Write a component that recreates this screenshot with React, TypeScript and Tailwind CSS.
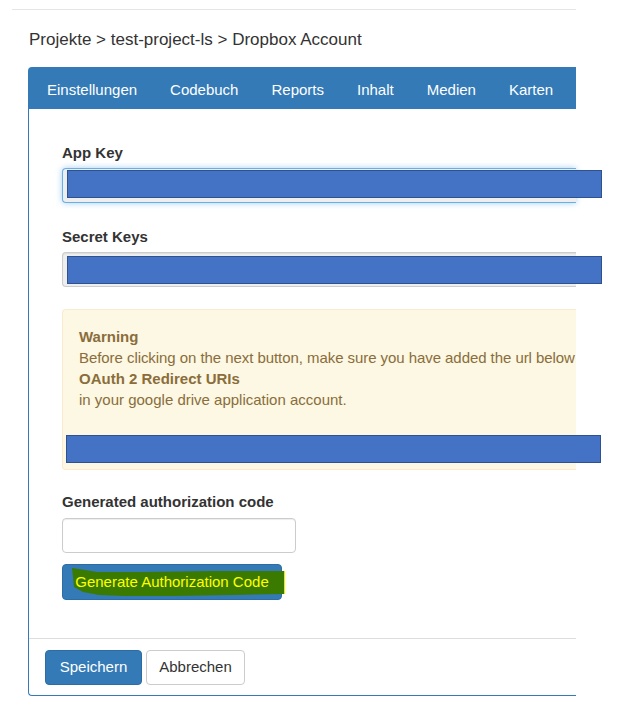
import React from 'react';

const tabs = ['Einstellungen', 'Codebuch', 'Reports', 'Inhalt', 'Medien', 'Karten'];

// redaction boxes drawn over the screenshot, they run past the crop edge
const Redact = ({ className }: { className: string }) => (
    <div
        className={`absolute left-[4px] h-[28px] w-[535px] border border-[#2f528f] bg-[#4472c4] ${className}`}
    />
);

const Highlight = () => (
    <svg
        className="pointer-events-none absolute left-0 top-0"
        width="224"
        height="36"
        viewBox="0 0 224 36"
    >
        <polygon
            points="9,3 22,5 34,7 80,7 150,6 221,6 221,29 170,30 110,31 60,31 36,30 20,27 11,22 10,12"
            fill="#3b7a00"
        />
        <line x1="221.5" y1="6" x2="221.5" y2="29" stroke="#e6f000" strokeWidth="1" />
    </svg>
);

const App = () => {
    return (
        <div className="min-h-[715px] bg-white font-['Liberation_Sans',Arial,sans-serif] text-[#333]">
            <div className="w-[576px] pt-[9px]">
                <div className="ml-[12px] h-px bg-[#e5e5e5]" />
                <div className="pl-[29px] pt-[19px] text-[17px] leading-[22px]">
                    Projekte &gt; test-project-ls &gt; Dropbox Account
                </div>

                <div className="ml-[28px] mt-[16px] rounded-l-[4px] border border-r-0 border-[#337ab7]">
                    <ul className="flex h-[41px] items-center gap-[33px] bg-[#337ab7] pl-[18px] pt-[2px] text-[15px] leading-[20px] text-white">
                        {tabs.map((t) => (
                            <li key={t}>{t}</li>
                        ))}
                    </ul>

                    <div className="pl-[33px] pt-[34px] pb-[38px] text-[15px] leading-[20px]">
                        <label className="block font-bold">App Key</label>
                        <div className="relative mt-[5px] h-[35px] rounded-l-[4px] border border-r-0 border-[#66afe9] bg-[#eee] shadow-[0_0_6px_rgba(102,175,233,0.6)]">
                            <Redact className="top-[1px]" />
                        </div>

                        <label className="mt-[24px] block font-bold">Secret Keys</label>
                        <div className="relative mt-[5px] h-[35px] rounded-l-[4px] border border-r-0 border-[#ccc] bg-[#eee] shadow-[inset_0_1px_1px_rgba(0,0,0,0.075)]">
                            <Redact className="top-[3px]" />
                        </div>

                        <div className="mt-[22px] rounded-l-[4px] border border-r-0 border-[#faebcc] bg-[#fcf8e3] pl-[16px] pt-[16px] pb-[6px] leading-[21px] text-[#8a6d3b]">
                            <div className="font-bold">Warning</div>
                            <div className="whitespace-nowrap tracking-[-0.004em]">
                                Before clicking on the next button, make sure you have added the url below
                            </div>
                            <div className="font-bold">OAuth 2 Redirect URIs</div>
                            <div>in your google drive application account.</div>
                            <div className="relative mt-[25px] h-[28px]">
                                <div className="absolute left-[-13px] top-0 h-[28px] w-[535px] border border-[#2f528f] bg-[#4472c4]" />
                            </div>
                        </div>

                        <label className="mt-[22px] block font-bold">Generated authorization code</label>
                        <input
                            className="mt-[6px] block h-[35px] w-[234px] rounded-[4px] border border-[#ccc] bg-white shadow-[inset_0_1px_1px_rgba(0,0,0,0.075)]"
                            type="text"
                        />
                        <button className="relative mt-[11px] flex h-[36px] w-[220px] items-center justify-center rounded-[4px] border border-[#2e6da4] bg-[#337ab7]">
                            <Highlight />
                            <span className="relative text-[#ffff00]">Generate Authorization Code</span>
                        </button>
                    </div>

                    <div className="flex gap-[4px] border-t border-[#ddd] pl-[16px] pt-[11px] pb-[10px] text-[15px]">
                        <button className="h-[35px] w-[97px] rounded-[4px] border border-[#2e6da4] bg-[#337ab7] text-white">
                            Speichern
                        </button>
                        <button className="h-[35px] w-[99px] rounded-[4px] border border-[#ccc] bg-white text-[#333]">
                            Abbrechen
                        </button>
                    </div>
                </div>
            </div>
        </div>
    );
};

export default App;
